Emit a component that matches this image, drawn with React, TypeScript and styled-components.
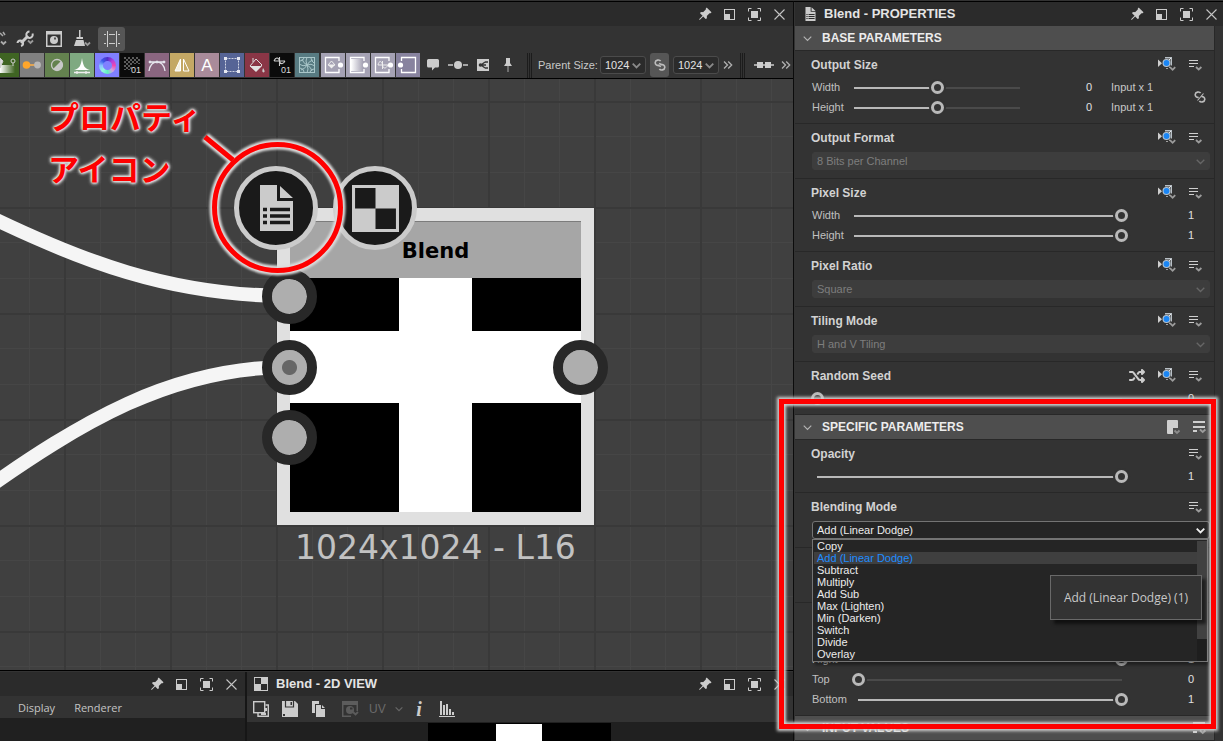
import React, { ReactNode, useState } from 'react';
import styled, { createGlobalStyle, css } from 'styled-components';
import { BsPinAngleFill } from 'react-icons/bs';
import { FaShuffle } from 'react-icons/fa6';

const ui = '"Liberation Sans", Arial, sans-serif';
const humanist = '"Open Sans", "Noto Sans", sans-serif';
const c = {
  bar: '#2b2b2b',
  panel: '#333333',
  raised: '#4e4e4e',
  field: '#3d3d3d',
  dark: '#202020',
  line: '#282828',
  text: '#d2d2d2',
  dim: '#7e7e7e',
  icon: '#cccccc',
};

const GlobalStyle = createGlobalStyle`
  *, *::before, *::after { box-sizing: border-box; }
  html, body { margin: 0; height: 100%; overflow: hidden; background: ${c.panel}; }
  body { font: 11px/14px ${ui}; color: ${c.text}; }
  button, select, input { font: inherit; color: inherit; margin: 0; }
  svg { display: block; flex: none; }
`;

/* ---------- shell ---------- */

const Shell = styled.div`
  display: flex;
  height: 100vh;
  padding-top: 1px;
`;

const Workspace = styled.main`
  flex: 1;
  min-width: 0;
  display: flex;
  flex-direction: column;
  border-top: 1px solid #000;
`;

const Sidebar = styled.aside`
  flex: 0 0 430px;
  position: relative;
  z-index: 1;
  display: flex;
  flex-direction: column;
  border-top: 1px solid #000;
  border-left: 1px solid #0c0c0c;
  padding-left: 1px;
  background: ${c.panel};
`;

const TitleBar = styled.header<{ $start?: number; $end?: number }>`
  flex: none;
  display: flex;
  align-items: center;
  height: 24px;
  padding: 0 ${p => p.$end ?? 2}px 0 ${p => p.$start ?? 7}px;
  background: ${c.bar};
`;

const Title = styled.h1`
  margin: 0 0 0 8px;
  font-size: 13px;
  line-height: 24px;
  font-weight: bold;
  color: #e4e4e4;
  white-space: nowrap;
`;

const WindowActions = styled.div`
  display: flex;
  gap: 2px;
  margin-left: auto;
`;

const IconButton = styled.button<{ $w?: number; $h?: number; $on?: boolean }>`
  flex: none;
  display: flex;
  align-items: center;
  justify-content: center;
  width: ${p => p.$w ?? 24}px;
  height: ${p => p.$h ?? 24}px;
  padding: 0;
  border: 0;
  border-radius: 3px;
  background: ${p => (p.$on ? '#565656' : 'transparent')};
  color: ${c.icon};
`;

/* ---------- icons ---------- */

const Chevron = ({ size = 9, color = '#9a9a9a', w = 1.5 }: { size?: number; color?: string; w?: number }) => (
  <svg width={size} height={size} viewBox="0 0 10 10" fill="none" stroke={color} strokeWidth={w}>
    <path d="M0.8 3 L5 7.2 L9.2 3" />
  </svg>
);

const DoubleChevron = () => (
  <svg width="10" height="10" viewBox="0 0 10 10" fill="none" stroke="#b0b0b0" strokeWidth="1.3">
    <path d="M1 1.5 L4.5 5 L1 8.5 M5.2 1.5 L8.7 5 L5.2 8.5" />
  </svg>
);

const RestoreIcon = () => (
  <svg width="11" height="11" viewBox="0 0 11 11">
    <rect x="0.5" y="0.5" width="10" height="10" fill="none" stroke="#ccc" />
    <rect x="1" y="5" width="5" height="5" fill="#ccc" />
  </svg>
);

const MaximizeIcon = () => (
  <svg width="13" height="13" viewBox="0 0 13 13">
    <path d="M3.500 0.500H0.500V3.500 M9.500 0.500H12.500V3.500 M3.500 12.500H0.500V9.500 M9.500 12.500H12.500V9.500" fill="none" stroke="#ccc" />
    <rect x="3" y="3" width="7" height="7" fill="#ccc" />
  </svg>
);

const CloseIcon = () => (
  <svg width="11" height="11" viewBox="0 0 11 11" stroke="#c4c4c4" strokeWidth="1.1">
    <path d="M0.5 0.5 L10.5 10.5 M10.5 0.5 L0.5 10.5" />
  </svg>
);

const PageIcon = ({ w, h, bg }: { w: number; h: number; bg: string }) => (
  <svg width={w} height={h} viewBox="0 0 33 46">
    <path d="M0 0H17V16H33V46H0Z M20 1L33 13H20Z" fill="#cbcbcb" />
    <path d="M3 24.5H7M10 24.5H30M3 31H7M10 31H30M3 37.5H7M10 37.5H30" stroke={bg} strokeWidth="3.4" />
  </svg>
);

const CheckerIcon = ({ size, bg }: { size: number; bg: string }) => (
  <svg width={size} height={size} viewBox="0 0 46 46">
    <rect width="46" height="46" fill="#cbcbcb" />
    <path d="M3 3H23V23H3Z M23 23H43V43H23Z" fill={bg} />
  </svg>
);

const MenuIcon = () => (
  <svg width="14" height="12" viewBox="0 0 14 12" fill="none">
    <path d="M0 1.5H9M0 4.5H9M0 7.5H5" stroke="#cfcfcf" />
    <path d="M7 8L9.7 10.5L12.4 8" stroke="#9c9c9c" strokeWidth="1.8" />
  </svg>
);

const GroupMenuIcon = () => (
  <svg width="14" height="14" viewBox="0 0 14 14" fill="none">
    <path d="M0 2H12M0 7H12M0 11H4" stroke="#cfcfcf" strokeWidth="2" />
    <path d="M7 9.500L9.700 12L12.400 9.500" stroke="#9c9c9c" strokeWidth="1.8" />
  </svg>
);

const InheritIcon = () => (
  <svg width="18" height="17" viewBox="0 0 18 17" fill="none">
    <path d="M0 2.5L4 6.200L0 10Z" fill="#cfcfcf" />
    <circle cx="8.500" cy="6" r="4" fill="#b4c4d4" />
    <circle cx="8.500" cy="6" r="2.900" fill="#1a86f5" />
    <path d="M7 0.700H13.300V8.500" stroke="#b9c0c6" strokeWidth="1.4" />
    <path d="M11 3L13 1" stroke="#e4e8ec" />
    <path d="M8 11.5H10M11.5 9.5V11" stroke="#a0a0a0" />
    <path d="M12 10.200L14.600 12.800L17.200 10.200" stroke="#9c9c9c" strokeWidth="1.8" />
  </svg>
);

const LinkIcon = ({ broken }: { broken?: boolean }) => (
  <svg width="12" height="12" viewBox="0 0 12 12" fill="none" stroke="#bdbdbd" strokeWidth="1.6">
    <path d="M6.6 2.2C5.4 0.2 1.4 0.8 1.2 3.6C1.1 5.4 3 6.8 4.6 6.2" />
    <path d="M5.4 9.8C6.6 11.8 10.6 11.2 10.8 8.4C10.9 6.6 9 5.2 7.4 5.8" />
    {broken ? <path d="M3.5 9.5L9.5 2.5" strokeWidth="1.1" /> : <path d="M3.8 6.3L7 7.6M5 4.4L8.2 5.7" />}
  </svg>
);

const PageMenuIcon = () => (
  <svg width="15" height="15" viewBox="0 0 15 15">
    <path d="M2 0H11a1 1 0 0 1 1 1V8H7V14H2a1 1 0 0 1-1-1V1a1 1 0 0 1 1-1Z" fill="#cfcfcf" />
    <path d="M8.5 10.5L11 13L13.5 10.5" fill="none" stroke="#8c8c8c" strokeWidth="1.8" />
  </svg>
);

const WindowButtons = () => (
  <WindowActions>
    <IconButton $w={23} aria-label="Pin"><BsPinAngleFill size={14} /></IconButton>
    <IconButton $w={23} aria-label="Float"><RestoreIcon /></IconButton>
    <IconButton $w={23} aria-label="Maximize"><MaximizeIcon /></IconButton>
    <IconButton $w={23} aria-label="Close"><CloseIcon /></IconButton>
  </WindowActions>
);

/* ---------- graph toolbars ---------- */

const ToolBar = styled.div`
  flex: none;
  display: flex;
  align-items: center;
  gap: 4px;
  height: 27px;
  padding-bottom: 2px;
  background: ${c.panel};
`;

const NodeBar = styled.div`
  flex: none;
  display: flex;
  height: 26px;
  background: ${c.panel};
  border-bottom: 1px solid #000;
  overflow: hidden;
`;

const TileGroup = styled.div<{ $first?: boolean }>`
  display: flex;
  flex: none;
  gap: 1px;
  margin-left: ${p => (p.$first ? -5 : 2)}px;
`;

const Tile = styled.button<{ $bg: string }>`
  display: flex;
  align-items: center;
  justify-content: center;
  width: 24px;
  height: 24px;
  padding: 0;
  border: 0;
  background: ${p => p.$bg};
`;

const Wheel = styled.span`
  width: 17px;
  height: 17px;
  border-radius: 50%;
  background: radial-gradient(circle, #8080ff 4px, transparent 5px),
    conic-gradient(#5030c8, #b040e0 45deg, #f048b0 90deg, #d0a0e0 135deg, #60f0c0 180deg, #98f4e4 225deg, #88c0ff 270deg, #3c58e8 315deg, #5030c8);
`;

const Grip = styled.span`
  flex: none;
  width: 5px;
  height: 25px;
  margin: 0 6px 0 7px;
  border: solid #1c1c1c;
  border-width: 0 1px;
  background: linear-gradient(90deg, transparent 1px, #1c1c1c 1px 2px, transparent 2px);
`;

const SizeGroup = styled.div`
  display: flex;
  flex: none;
  align-items: center;
  gap: 4px;
  height: 24px;
`;

const SizeLabel = styled.label`
  width: 58px;
  color: #c8c8c8;
  white-space: nowrap;
`;

const SelectBox = styled.span`
  position: relative;
  display: block;
  flex: none;
`;

const SelectArrow = styled.span`
  position: absolute;
  right: 5px;
  top: 50%;
  margin-top: -4px;
  pointer-events: none;
`;

const SizeSelect = styled.select`
  appearance: none;
  display: block;
  width: 46px;
  height: 18px;
  padding: 0 0 0 4px;
  border: 1px solid #4b4b4b;
  border-radius: 3px;
  background: #2b2b2b;
  color: #e2e2e2;
`;

const g = '#e6e6ee';
const tiles: [string, string, ReactNode][] = [
  ['Gradient', '#3f6423', <svg key="i" width="24" height="24"><defs><linearGradient id="gm"><stop offset="0" stopColor="#fff" /><stop offset="1" stopColor="#3f6423" /></linearGradient></defs><rect x="5" y="12" width="15" height="8" fill="url(#gm)" /><circle cx="18" cy="8" r="2" fill="none" stroke="#ccc" /><path d="M18 10V13M5 5L8 8L5 15Z" stroke="#ccc" fill="#ddd" /></svg>],
  ['Blend', '#808080', <svg key="i" width="24" height="24"><path d="M6 12H18" stroke="#ffb04a" strokeWidth="1.5" /><circle cx="6.500" cy="12" r="3.800" fill="#ffa62b" /><circle cx="17.500" cy="12" r="3.400" fill="#b8b8b8" /></svg>],
  ['Levels', '#64824f', <svg key="i" width="24" height="24"><circle cx="12" cy="12" r="5.500" fill="none" stroke="#c8c8c8" strokeWidth="1.300" /><path d="M16 8A5.500 5.500 0 1 1 8 16Z" fill="#c8c8c8" /></svg>],
  ['Histogram', '#7fa981', <svg key="i" width="24" height="24"><path d="M4 17C9 16 11 13 12 5C13 13 15 16 20 17Z" fill="#fff" /><path d="M4 19.500H20M7 18V21M16 18V21" stroke="#eee" strokeWidth="1.300" /></svg>],
  ['HSL', '#8080ff', <Wheel key="i" />],
  ['Bitmap', '#0b0b0b', <svg key="i" width="24" height="24"><defs><pattern id="dots" width="4" height="4" patternUnits="userSpaceOnUse"><path d="M0 0H2V2H0ZM2 2H4V4H2Z" fill="#5c5c5c" /></pattern></defs><path d="M4 4H20V11H12V17H4Z" fill="url(#dots)" /><text x="11" y="20" fontSize="9" fill="#ddd">01</text></svg>],
  ['Curve', '#8a6680', <svg key="i" width="24" height="24" fill="none" stroke={g}><path d="M4 9H20M4 18C5 12 8 9 12 9C16 9 19 12 20 18" strokeWidth="1.300" /><g fill={g}><circle cx="5" cy="9" r="1" /><circle cx="12" cy="9" r="1" /><circle cx="19" cy="9" r="1" /></g></svg>],
  ['Mirror', '#c4a865', <svg key="i" width="24" height="24" stroke="#fff"><path d="M10.500 6V18H5Z" fill="#f4f0e4" /><path d="M13.500 6V18H19Z" fill="none" /></svg>],
  ['Text', '#a98b9a', <svg key="i" width="24" height="24"><text x="12" y="18" fontSize="17" textAnchor="middle" fill="#fff">A</text></svg>],
  ['Transform', '#566496', <svg key="i" width="24" height="24"><rect x="5.500" y="5.500" width="13" height="13" fill="none" stroke="#d0d4e4" strokeDasharray="2 1" /><path d="M4 4H7V7H4ZM17 4H20V7H17ZM4 17H7V20H4ZM17 17H20V20H17Z" fill="#e6e8f2" /></svg>],
  ['Fill', '#8a3646', <svg key="i" width="24" height="24"><path d="M5 13L11 6L17 12L11 18Z M8 9V5" fill="none" stroke="#ddd" /><path d="M5 13H17L11 19Z" fill="#e2e2e2" /><path d="M18 15C20 18 20 19 18.500 19.500C17 19 17 18 18 15Z" fill="#ccc" /></svg>],
  ['Value', '#0b0b0b', <svg key="i" width="24" height="24"><path d="M4 8C6 3 9 5 9.500 8S13 12 15 8M9.500 4V13M4 8H15" fill="none" stroke="#ccc" strokeWidth="1.100" /><text x="11" y="20" fontSize="9" fill="#ddd">01</text></svg>],
  ['FX-Map', '#587b82', <svg key="i" width="24" height="24" fill="none" stroke="#a9c6c9"><rect x="4.500" y="4.500" width="15" height="15" /><path d="M12 12Q10 8 12 4M12 12Q16 10 20 13M12 12Q14 16 12 20M12 12Q8 14 4 11M12 12Q14 8 18 7M12 12Q16 14 17 18M12 12Q10 16 6 17M12 12Q8 10 7 6M9 5Q8 8 5 8M15 19Q16 16 19 16M16 5Q16 8 19 10M5 15Q9 16 9 19" /></svg>],
];

const frame = <path d="M18 8V4.500H4.500V19.500H18V16" fill="none" stroke="#fff" strokeWidth="1.300" />;
const ioTiles: [string, string, ReactNode][] = [
  ['Input color', '#a5a2b4', <svg key="i" width="24" height="24">{frame}<circle cx="19.500" cy="12" r="2.600" fill="#fff" /><path d="M7 12L10.500 8L14 12Z" fill="none" stroke="#eee" /><path d="M7 12H14L10.500 15.500Z" fill="#eee" /></svg>],
  ['Input gradient', '#a5a2b4', <svg key="i" width="24" height="24"><defs><linearGradient id="ig"><stop offset="0" stopColor="#fff" /><stop offset="1" stopColor="#a5a2b4" /></linearGradient></defs>{frame}<rect x="5" y="6" width="12" height="12" fill="url(#ig)" /><circle cx="19.500" cy="12" r="2.600" fill="#fff" /></svg>],
  ['Input value', '#a5a2b4', <svg key="i" width="24" height="24">{frame}<path d="M7 12C8 7 11 8 11.500 12S15 16 17 12M11.500 8V16M7 12H17" fill="none" stroke="#eee" /><circle cx="19.500" cy="12" r="2.600" fill="#fff" /></svg>],
  ['Output', '#88839f', <svg key="i" width="24" height="24"><path d="M5.500 8V4.500H19.500V19.500H5.500V16" fill="none" stroke="#fff" strokeWidth="1.300" /><circle cx="4.500" cy="12" r="2.600" fill="#fff" /></svg>],
];

const GraphToolbars = () => (
  <>
    <ToolBar>
      <IconButton $w={10} aria-label="Tools">
        <svg width="10" height="16" fill="none" stroke="#aaa"><path d="M0 2L3 5M3 1L5 4" strokeWidth="1.5" /><path d="M1 10.500L3.500 13L6 10.500" strokeWidth="1.800" /></svg>
      </IconButton>
      <IconButton aria-label="Utilities">
        <svg width="20" height="18" fill="none" stroke="#ccc">
          <path d="M5 13L12 6" strokeWidth="3" />
          <path d="M16.500 3.500A3.200 3.200 0 1 1 13.500 1.500M1.500 13A2.800 2.800 0 1 1 5 16" strokeWidth="2" />
          <path d="M12 10.500L14.500 13L17 10.500" stroke="#999" strokeWidth="1.800" />
        </svg>
      </IconButton>
      <IconButton aria-label="Preview">
        <svg width="16" height="16"><path d="M0 0H16V16H0Z M1.500 3.500V14.500H14.500V3.500Z" fill="#ccc" fillRule="evenodd" /><circle cx="8" cy="9" r="4" fill="#ccc" /><path d="M8 6.500h2v2h-2Z" fill="#555" /></svg>
      </IconButton>
      <IconButton aria-label="Clean">
        <svg width="18" height="18"><path d="M6 0H7.500V7H10V9H3.500V7H6Z M3 10H10.500L12 16H1Z" fill="#ccc" /><path d="M12 12.500L14.500 15L17 12.500" fill="none" stroke="#999" strokeWidth="1.800" /></svg>
      </IconButton>
      <IconButton $w={27} $on aria-label="Snap to grid">
        <svg width="16" height="16" fill="none" stroke="#ccc"><path d="M3.500 0V16M12.500 0V16M0 3.500H2M5 3.500H11M14 3.500H16M0 12.500H2M5 12.500H11M14 12.500H16" /></svg>
      </IconButton>
    </ToolBar>
    <NodeBar>
      <TileGroup $first>
        {tiles.map(([name, bg, icon]) => <Tile key={name} $bg={bg} aria-label={name}>{icon}</Tile>)}
      </TileGroup>
      <TileGroup>
        {ioTiles.map(([name, bg, icon]) => <Tile key={name} $bg={bg} aria-label={name}>{icon}</Tile>)}
        <IconButton aria-label="Comment">
          <svg width="12" height="12"><path d="M1.500 0H10.500Q12 0 12 1.500V7Q12 8.500 10.500 8.500H8L5 11.500V8.500H1.500Q0 8.500 0 7V1.500Q0 0 1.500 0Z" fill="#ccc" /></svg>
        </IconButton>
        <IconButton aria-label="Dot">
          <svg width="20" height="10"><path d="M0 5H5M15 5H20" stroke="#ccc" strokeWidth="1.500" /><circle cx="10" cy="5" r="4" fill="#ccc" /></svg>
        </IconButton>
        <IconButton aria-label="Portal">
          <svg width="12" height="12"><rect width="12" height="12" fill="#ccc" /><path d="M4 6L8 3M4 6H9M4 6L8 9M8 3H11M8 9H11" stroke="#333" strokeWidth="1.300" /><circle cx="3.500" cy="6" r="1.800" fill="#333" /></svg>
        </IconButton>
        <IconButton aria-label="Pin node">
          <svg width="8" height="14"><path d="M2 0H6V5L8 8H0L2 5Z" fill="#ccc" /><path d="M4 8V14" stroke="#aaa" /></svg>
        </IconButton>
      </TileGroup>
      <Grip />
      <SizeGroup>
        <SizeLabel htmlFor="pw">Parent Size:</SizeLabel>
        <SelectBox>
          <SizeSelect id="pw"><option>1024</option></SizeSelect>
          <SelectArrow><Chevron color="#8a8a8a" w={2} /></SelectArrow>
        </SelectBox>
        <IconButton $w={19} $on aria-label="Link sizes"><LinkIcon /></IconButton>
        <SelectBox>
          <SizeSelect aria-label="Parent height"><option>1024</option></SizeSelect>
          <SelectArrow><Chevron color="#8a8a8a" w={2} /></SelectArrow>
        </SelectBox>
        <IconButton $w={10} aria-label="More"><DoubleChevron /></IconButton>
      </SizeGroup>
      <Grip />
      <SizeGroup>
        <IconButton $w={26} aria-label="Connect">
          <svg width="20" height="8"><path d="M0 4H20" stroke="#ccc" strokeWidth="1.500" /><path d="M3 1H9V7H3ZM11 1H17V7H11Z" fill="#ccc" /></svg>
        </IconButton>
        <IconButton $w={10} aria-label="More"><DoubleChevron /></IconButton>
      </SizeGroup>
    </NodeBar>
  </>
);

/* ---------- graph canvas ---------- */

const Canvas = styled.section`
  flex: 1;
  min-height: 0;
  position: relative;
  overflow: hidden;
  background: #404040;
`;

const Backdrop = styled.svg`
  position: absolute;
  inset: 0;
  width: 100%;
  height: 100%;
`;

const Node = styled.article`
  position: absolute;
  left: 277px;
  top: 129px;
  width: 317px;
  height: 317px;
  border: 13px solid #e0e0e0;
  background: linear-gradient(90deg, transparent 109px, #fff 109px 182px, transparent 182px),
    linear-gradient(#000 110px, #fff 110px 182px, #000 182px);
`;

const NodeTitle = styled.h2`
  margin: 0;
  height: 57px;
  background: #a6a6a6;
  border-top: 1px solid #7c7c7c;
  font: bold 21px/58px "DejaVu Sans", sans-serif;
  color: #000;
  text-align: center;
`;

const NodeCaption = styled.p`
  position: absolute;
  top: 307px;
  left: -13px;
  width: 317px;
  margin: 0;
  font: 33px/40px "DejaVu Sans", sans-serif;
  color: #c2c2c2;
  text-align: center;
  white-space: nowrap;
`;

const Port = styled.span<{ $x: number; $y: number; $used?: boolean }>`
  position: absolute;
  left: ${p => p.$x - 28}px;
  top: ${p => p.$y - 27}px;
  width: 55px;
  height: 55px;
  border: 10px solid #282828;
  border-radius: 50%;
  background: ${p => (p.$used ? 'radial-gradient(circle, #666 7px, #aeaeae 8px)' : '#aeaeae')};
  background-clip: padding-box;
  background-origin: padding-box;
`;

const Badge = styled.button<{ $x: number; $y: number }>`
  position: absolute;
  left: ${p => p.$x - 42}px;
  top: ${p => p.$y - 42}px;
  display: flex;
  align-items: center;
  justify-content: center;
  width: 84px;
  height: 84px;
  padding: 0;
  border: 5px solid #cbcbcb;
  border-radius: 50%;
  background: #1a1a1a;
`;

const Callout = styled.p`
  position: absolute;
  left: 48px;
  top: 11px;
  margin: 0;
  font: bold 31px/52px "Noto Sans CJK JP", sans-serif;
  color: #f00;
  white-space: nowrap;
  text-shadow: 0 0 2px #ddd, 0 0 2px #ddd, 0 0 3px #ddd, 0 0 3px #ddd, 0 0 4px #ddd, 0 0 4px #ddd;
`;

const Marker = styled.svg`
  position: absolute;
  left: 197px;
  top: 53px;
  overflow: visible;
`;

const Graph = () => (
  <Canvas>
    <Backdrop>
      <defs>
        <pattern id="grid" x="64" y="22" width="106" height="106" patternUnits="userSpaceOnUse">
          <path d="M36.500 0V106M71.500 0V106M0 35.500H106M0 71.500H106" stroke="#464646" />
          <path d="M0 1H106M1 0V106" stroke="#393939" strokeWidth="2" />
        </pattern>
      </defs>
      <rect width="100%" height="100%" fill="url(#grid)" />
      <g fill="none" stroke="#f5f5f5" strokeWidth="14">
        <path d="M-20 133C80 182 170 217 290 217" />
        <path d="M-20 414C80 344 170 288 290 288" />
      </g>
    </Backdrop>
    <Node>
      <NodeTitle>Blend</NodeTitle>
      <NodeCaption>1024x1024 - L16</NodeCaption>
    </Node>
    <Port $x={290} $y={217} />
    <Port $x={290} $y={288} $used />
    <Port $x={290} $y={358} />
    <Port $x={581} $y={288} />
    <Badge $x={375} $y={129} aria-label="View output"><CheckerIcon size={47} bg="#1a1a1a" /></Badge>
    <Badge $x={276} $y={129} aria-label="Properties"><PageIcon w={33} h={46} bg="#1a1a1a" /></Badge>
    <Marker width="160" height="150">
      <defs>
        <filter id="soft" x="-20%" y="-20%" width="140%" height="140%"><feGaussianBlur stdDeviation="1" /></filter>
      </defs>
      <g fill="none" stroke="#dcdcdc" strokeWidth="10" filter="url(#soft)">
        <circle cx="80.500" cy="75.500" r="63" />
        <path d="M8 5L36 28" />
      </g>
      <g fill="none" stroke="#f00" strokeWidth="5">
        <circle cx="80.500" cy="75.500" r="63" />
        <path d="M8 5L36 28" />
      </g>
    </Marker>
    <Callout>プロパティ<br />アイコン</Callout>
  </Canvas>
);

/* ---------- lower docks ---------- */

const Docks = styled.div`
  flex: 0 0 71px;
  display: flex;
  border-top: 1px solid #000;
  padding-top: 1px;
`;

const Dock = styled.section<{ $w?: number }>`
  ${p => (p.$w ? css`flex: 0 0 ${p.$w}px; border-right: 2px solid #161616;` : css`flex: 1;`)}
  min-width: 0;
  display: flex;
  flex-direction: column;
  background: ${c.dark};
`;

const MenuBar = styled.nav`
  display: flex;
  align-items: center;
  gap: 19px;
  height: 22px;
  padding: 1px 0 0 18px;
  background: ${c.panel};
  font: 11px/20px ${humanist};
`;

const MenuLink = styled.a`
  color: #c4c4c4;
  text-decoration: none;
`;

const ViewBar = styled.div`
  display: flex;
  align-items: center;
  gap: 5px;
  height: 26px;
  padding-left: 2px;
  background: ${c.panel};
`;

const UvLabel = styled.span`
  display: flex;
  align-items: center;
  gap: 9px;
  width: 34px;
  font-size: 12px;
  color: #6a6a6a;
`;

const InfoGlyph = styled.span`
  font: italic bold 20px/20px "Liberation Serif", serif;
  color: #ccc;
`;

const Preview = styled.div`
  flex: 1;
  width: 183px;
  margin: 1px 0 0 181px;
  background: linear-gradient(90deg, transparent 68px, #fff 68px 114px, transparent 114px) 0 1px no-repeat, #000;
`;

const LowerDocks = () => (
  <Docks>
    <Dock $w={247}>
      <TitleBar><WindowButtons /></TitleBar>
      <MenuBar>
        <MenuLink href="#display">Display</MenuLink>
        <MenuLink href="#renderer">Renderer</MenuLink>
      </MenuBar>
    </Dock>
    <Dock>
      <TitleBar>
        <CheckerIcon size={14} bg="#2b2b2b" />
        <Title>Blend - 2D VIEW</Title>
        <WindowButtons />
      </TitleBar>
      <ViewBar>
        <IconButton aria-label="Export">
          <svg width="16" height="16" fill="none" stroke="#ccc"><rect x="0.700" y="0.700" width="11" height="11" strokeWidth="1.400" /><path d="M5 12V15.300H15.300V4H12.500" strokeWidth="1.400" /><path d="M13 7V10M8 13H13" strokeWidth="2" /></svg>
        </IconButton>
        <IconButton aria-label="Save">
          <svg width="16" height="16"><path d="M0 0H13L16 3V16H0Z" fill="#ccc" /><path d="M3.500 0V6H11.500V0" fill="none" stroke="#333" strokeWidth="1.200" /><path d="M8.500 1H10V4H8.500ZM1 13H3V15H1Z" fill="#333" /></svg>
        </IconButton>
        <IconButton aria-label="Copy">
          <svg width="14" height="16"><path d="M0 0H7V3H3V12H0Z M4 4H9V8H13V16H4Z M10 4L13 7H10Z" fill="#ccc" /></svg>
        </IconButton>
        <IconButton $w={28} aria-label="Channels" disabled>
          <svg width="17" height="16"><path d="M0 0H16V10H14.500V4H1.500V14.500H9V16H0Z" fill="#5c5c5c" /><circle cx="8" cy="9" r="4" fill="#5c5c5c" /><path d="M8 6.500h2.500v2h-2.500Z" fill="#333" /><path d="M11 11L13.500 13.500L16 11" fill="none" stroke="#5c5c5c" strokeWidth="1.800" /></svg>
        </IconButton>
        <UvLabel>UV<Chevron size={8} color="#666" /></UvLabel>
        <IconButton $w={22} aria-label="Information"><InfoGlyph>i</InfoGlyph></IconButton>
        <IconButton aria-label="Histogram">
          <svg width="16" height="16"><path d="M0 15.500H16" stroke="#ccc" /><path d="M1 0H3V14H1ZM4 4H6V14H4ZM7 3H9V14H7ZM10 8H12V14H10ZM13 11H15V14H13Z" fill="#ccc" /></svg>
        </IconButton>
      </ViewBar>
      <Preview />
    </Dock>
  </Docks>
);

/* ---------- properties ---------- */

const PanelBody = styled.div`
  display: flex;
  flex: 1;
  min-height: 0;
`;

const Sections = styled.div`
  flex: 1;
  min-width: 0;
`;

const ScrollGutter = styled.div`
  flex: 0 0 9px;
  border-left: 1px solid ${c.line};
`;

const GroupBox = styled.section`
  position: relative;
`;

const GroupHeader = styled.h2`
  display: flex;
  align-items: center;
  height: 25px;
  margin: 0;
  padding: 0 7px 0 8px;
  border-bottom: 1px solid ${c.line};
  background: ${c.raised};
  font-size: 12px;
  line-height: 24px;
  color: #ececec;
`;

const GroupName = styled.span`
  margin-left: 10px;
  flex: 1;
`;

const GroupActions = styled.span`
  display: flex;
  align-items: center;
  gap: 12px;
`;

const Field = styled.fieldset<{ $pick?: boolean }>`
  margin: 0;
  min-width: 0;
  border: 0;
  padding: 4px 4px ${p => (p.$pick ? 8 : 6)}px 16px;
  border-bottom: 1px solid ${c.line};
`;

const FieldHead = styled.div<{ $pick?: boolean }>`
  display: flex;
  align-items: center;
  gap: 13px;
  height: 20px;
  margin-bottom: ${p => (p.$pick ? 4 : 2)}px;
  padding-right: 7px;
`;

const FieldName = styled.h3`
  flex: 1;
  margin: 0;
  font-size: 12px;
  line-height: 20px;
  color: ${c.text};
`;

const Controls = styled.div<{ $inset?: boolean }>`
  display: flex;
  align-items: center;
  padding-right: ${p => (p.$inset ? 4 : 0)}px;
`;

const Rows = styled.div`
  flex: 1;
`;

const Row = styled.label`
  display: flex;
  align-items: center;
  height: 20px;
`;

const RowName = styled.span<{ $w: number }>`
  flex: 0 0 ${p => p.$w}px;
  padding-left: 1px;
  color: #c0c0c0;
`;

const Value = styled.span`
  flex: 0 0 66px;
  text-align: right;
  color: #e0e0e0;
`;

const Unit = styled.span`
  flex: 0 0 83px;
  margin-left: 19px;
  color: #c8c8c8;
`;

const Slider = styled.input`
  appearance: none;
  flex: 1;
  min-width: 0;
  height: 13px;
  background: transparent;
  &::-webkit-slider-runnable-track {
    height: 13px;
    background: linear-gradient(90deg, #b9b9b9 var(--at), #4a4a4a var(--at)) 6px 6px / calc(100% - 12px) 2px no-repeat;
  }
  &::-webkit-slider-thumb {
    appearance: none;
    width: 13px;
    height: 13px;
    border: 3px solid #b9b9b9;
    border-radius: 50%;
    background: ${c.panel};
    box-shadow: 0 0 0 2px ${c.panel};
  }
`;

const PickBox = styled(SelectBox)`
  flex: 1;
  margin-left: 1px;
`;

const Pick = styled.select`
  appearance: none;
  display: block;
  width: 100%;
  height: 18px;
  padding: 0 0 0 4px;
  border: 1px solid #747474;
  border-radius: 3px;
  background: #252525;
  color: #ececec;
  &:disabled {
    opacity: 1;
    border-color: ${c.field};
    background: ${c.field};
    color: ${c.dim};
  }
`;

const Popup = styled.div`
  position: absolute;
  z-index: 2;
  top: 100%;
  left: 0;
  right: 2px;
  display: flex;
  height: 123px;
  border: 1px solid #747474;
  background: #252525;
  box-shadow: 3px 3px 3px rgba(0, 0, 0, 0.4);
`;

const Options = styled.ul`
  flex: 1;
  margin: 0;
  padding: 0 0 0 1px;
  list-style: none;
`;

const Option = styled.li<{ $on?: boolean }>`
  height: 12px;
  padding-left: 3px;
  line-height: 12px;
  background: ${p => (p.$on ? '#3f3f3f' : 'transparent')};
  color: ${p => (p.$on ? '#1e8cff' : '#ececec')};
`;

const PopupScroll = styled.span`
  width: 10px;
  margin-top: 1px;
  background: linear-gradient(#414141 98px, #1e1e1e 98px);
`;

const Tooltip = styled.div`
  position: absolute;
  z-index: 3;
  right: 8px;
  top: 54px;
  width: 152px;
  height: 45px;
  border: 1px solid #696969;
  background: ${c.panel};
  box-shadow: 4px 4px 3px rgba(0, 0, 0, 0.55);
  font: 12px/43px ${humanist};
  color: #c8c8c8;
  text-align: center;
  white-space: nowrap;
`;

const Highlight = styled.div`
  position: absolute;
  z-index: 4;
  inset: -16px -2px -13px -16px;
  border: 5px solid #f00;
  box-shadow: 0 0 3px 2px #d0d0d0, inset 0 0 3px 2px #d0d0d0;
  pointer-events: none;
`;

/* Keeps the height of a field that the open list hides. */
const CoveredField = styled.div`
  height: 55px;
  border-bottom: 1px solid ${c.line};
`;

const CoveredRows = styled.div`
  height: 42px;
`;

type SliderSpec = { name?: string; at: number; value: string; unit?: string };

const SliderRow = ({ spec, title, labelWidth }: { spec: SliderSpec; title: string; labelWidth: number }) => {
  const [at, setAt] = useState(spec.at);
  return (
    <Row>
      {spec.name && <RowName $w={labelWidth}>{spec.name}</RowName>}
      <Slider
        type="range"
        aria-label={`${title} ${spec.name ?? ''}`}
        value={at}
        onChange={e => setAt(Number(e.target.value))}
        style={{ '--at': `${at}%` } as React.CSSProperties}
      />
      <Value>{spec.value}</Value>
      {spec.unit && <Unit>{spec.unit}</Unit>}
    </Row>
  );
};

const Head = ({ name, pick, inherit = true, shuffle }: { name: string; pick?: boolean; inherit?: boolean; shuffle?: boolean }) => (
  <FieldHead $pick={pick}>
    <FieldName>{name}</FieldName>
    {shuffle && <IconButton $w={16} $h={16} aria-label="Randomize"><FaShuffle size={16} /></IconButton>}
    {inherit && <IconButton $w={18} $h={17} aria-label={`${name} inheritance`}><InheritIcon /></IconButton>}
    <IconButton $w={14} $h={14} aria-label={`${name} menu`}><MenuIcon /></IconButton>
  </FieldHead>
);

const SliderField = ({
  name, rows, labelWidth = 37, inherit, shuffle, link, covered,
}: {
  name: string; rows: SliderSpec[]; labelWidth?: number; inherit?: boolean; shuffle?: boolean; link?: boolean; covered?: boolean;
}) => (
  <Field aria-label={name}>
    {covered ? <CoveredRows /> : <Head name={name} inherit={inherit} shuffle={shuffle} />}
    <Controls $inset>
      <Rows>
        {rows.map((r, i) => <SliderRow key={i} spec={r} title={name} labelWidth={labelWidth} />)}
      </Rows>
      <IconButton $w={12} $h={16} aria-label={`${name} link`} disabled={!link}>{link && <LinkIcon broken />}</IconButton>
    </Controls>
  </Field>
);

const PickField = ({
  name, value, inherit, open, children,
}: { name: string; value: string; inherit?: boolean; open?: boolean; children?: ReactNode }) => (
  <Field $pick>
    <Head name={name} pick inherit={inherit} />
    <Controls>
      <PickBox>
        <Pick aria-label={name} disabled={!open}><option>{value}</option></Pick>
        <SelectArrow><Chevron color={open ? '#f0f0f0' : '#666'} w={open ? 2 : 1.5} /></SelectArrow>
        {children}
      </PickBox>
    </Controls>
  </Field>
);

const modes = ['Copy', 'Add (Linear Dodge)', 'Subtract', 'Multiply', 'Add Sub', 'Max (Lighten)', 'Min (Darken)', 'Switch', 'Divide', 'Overlay'];

const Group = ({ name, actions, children }: { name: string; actions?: ReactNode; children?: ReactNode }) => (
  <GroupBox>
    <GroupHeader>
      <Chevron color="#b4b4b4" w={1.3} />
      <GroupName>{name}</GroupName>
      <GroupActions>{actions}</GroupActions>
    </GroupHeader>
    {children}
  </GroupBox>
);

const Properties = () => (
  <Sidebar>
    <TitleBar $start={10} $end={0}>
      <PageIcon w={11} h={14} bg="#2b2b2b" />
      <Title>Blend - PROPERTIES</Title>
      <WindowButtons />
    </TitleBar>
    <PanelBody>
      <Sections>
        <Group name="BASE PARAMETERS">
          <SliderField
            name="Output Size"
            link
            rows={[
              { name: 'Width', at: 50, value: '0', unit: 'Input x 1' },
              { name: 'Height', at: 50, value: '0', unit: 'Input x 1' },
            ]}
          />
          <PickField name="Output Format" value="8 Bits per Channel" />
          <SliderField
            name="Pixel Size"
            rows={[{ name: 'Width', at: 100, value: '1' }, { name: 'Height', at: 100, value: '1' }]}
          />
          <PickField name="Pixel Ratio" value="Square" />
          <PickField name="Tiling Mode" value="H and V Tiling" />
          <SliderField name="Random Seed" shuffle rows={[{ at: 0, value: '0' }]} />
        </Group>
        <Group
          name="SPECIFIC PARAMETERS"
          actions={<><PageMenuIcon /><GroupMenuIcon /></>}
        >
          <SliderField name="Opacity" inherit={false} rows={[{ at: 100, value: '1' }]} />
          <PickField name="Blending Mode" value="Add (Linear Dodge)" inherit={false} open>
            <Popup>
              <Options role="listbox" aria-label="Blending modes">
                {modes.map(m => (
                  <Option key={m} role="option" aria-selected={m === 'Add (Linear Dodge)'} $on={m === 'Add (Linear Dodge)'}>
                    {m}
                  </Option>
                ))}
              </Options>
              <PopupScroll />
            </Popup>
            <Tooltip role="tooltip">Add (Linear Dodge) (1)</Tooltip>
          </PickField>
          <CoveredField />
          <SliderField
            name="Cropping Area"
            covered
            labelWidth={41}
            rows={[
              { name: 'Right', at: 100, value: '1' },
              { name: 'Top', at: 0, value: '0' },
              { name: 'Bottom', at: 100, value: '1' },
            ]}
          />
          <Highlight />
        </Group>
        <Group name="INPUT VALUES" actions={<GroupMenuIcon />} />
      </Sections>
      <ScrollGutter />
    </PanelBody>
  </Sidebar>
);

const App = () => (
  <>
    <GlobalStyle />
    <Shell>
      <Workspace>
        <TitleBar><WindowButtons /></TitleBar>
        <GraphToolbars />
        <Graph />
        <LowerDocks />
      </Workspace>
      <Properties />
    </Shell>
  </>
);

export default App;
